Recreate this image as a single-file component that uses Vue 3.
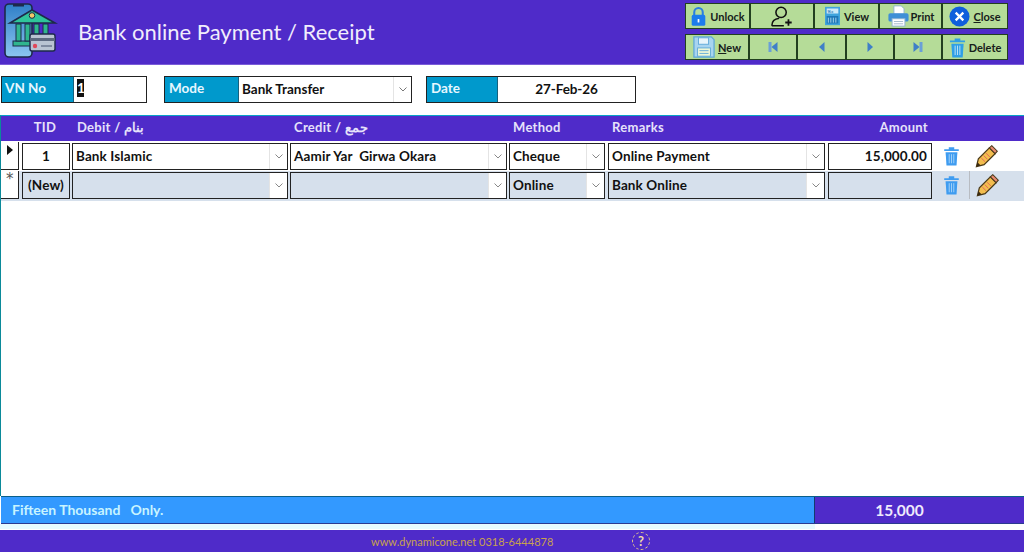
<script setup>
const rows = [
  { tid: '1', debit: 'Bank Islamic', credit: 'Aamir Yar  Girwa Okara', method: 'Cheque', remarks: 'Online Payment', amount: '15,000.00', isNew: false },
  { tid: '(New)', debit: '', credit: '', method: 'Online', remarks: 'Bank Online', amount: '', isNew: true }
]
const words = 'Fifteen Thousand   Only.'
</script>

<template>
  <div class="app">
    <header class="top">
      <svg class="logo" viewBox="0 0 60 60" width="60" height="60">
        <defs>
          <linearGradient id="ph" x1="0" y1="0" x2="0" y2="1">
            <stop offset="0" stop-color="#2f7fc8" />
            <stop offset="1" stop-color="#8cc6f0" />
          </linearGradient>
        </defs>
        <rect x="5" y="4" width="27" height="53" rx="4" fill="url(#ph)" stroke="#1d2a4a" stroke-width="1.6" />
        <rect x="13" y="4" width="11" height="2.5" fill="#1d2a4a" />
        <rect x="13" y="41" width="34" height="5" fill="#2fb58e" stroke="#1d2a4a" />
        <rect x="16" y="24" width="5" height="17" fill="#2fb58e" stroke="#1d2a4a" />
        <rect x="25" y="24" width="5" height="17" fill="#2fb58e" stroke="#1d2a4a" />
        <rect x="34" y="24" width="5" height="17" fill="#2fb58e" stroke="#1d2a4a" />
        <rect x="43" y="24" width="5" height="12" fill="#2fb58e" stroke="#1d2a4a" />
        <path d="M10 23 L32 10 L55 23 Z" fill="#2fc59a" stroke="#1d2a4a" stroke-width="1.6" />
        <circle cx="32" cy="15.5" r="2.8" fill="#f1c96a" stroke="#1d2a4a" />
        <rect x="30" y="34" width="25" height="17" rx="2" fill="#b9c4d2" stroke="#1d2a4a" stroke-width="1.4" />
        <rect x="30" y="38" width="25" height="3" fill="#5d6a80" />
        <circle cx="35" cy="46" r="2.2" fill="#e0485a" />
        <rect x="41" y="45" width="11" height="2" fill="#7f8ba0" />
      </svg>
      <h1 class="title">Bank online Payment / Receipt</h1>
      <div class="toolbar">
        <div class="tb-row tb-first">
          <button class="tb">
            <svg viewBox="0 0 20 24" width="17" height="21"><path d="M5 11V7a5 5 0 0 1 10 0v4" fill="none" stroke="#2a7fe0" stroke-width="2.4" /><rect x="2" y="10" width="16" height="13" rx="2" fill="#1c7cec" /><rect x="9" y="15" width="2" height="4" fill="#fff" /></svg>
            <span>Unlock</span>
          </button>
          <button class="tb">
            <svg viewBox="0 0 26 24" width="24" height="23"><circle cx="12" cy="7.5" r="5.6" fill="none" stroke="#111" stroke-width="1.7" /><path d="M2 22c0-5 4-7.5 8-8M2 22h13" fill="none" stroke="#111" stroke-width="1.7" /><path d="M20 15v7M16.500 18.500h7" stroke="#111" stroke-width="1.9" /></svg>
          </button>
          <button class="tb">
            <svg viewBox="0 0 20 24" width="17" height="20"><rect x="1" y="1" width="18" height="22" fill="#3fa3dc" /><rect x="3" y="3" width="14" height="6" fill="#cfeaf7" /><text x="4" y="8.300" class="mini">%=</text><rect x="3" y="12" width="14" height="9" fill="#1d78b8" /><path d="M5 14v6M8 14v6M11 14v6M14 14v6" stroke="#bfe3f5" stroke-width="1" /></svg>
            <span>View</span>
          </button>
          <button class="tb">
            <svg viewBox="0 0 24 24" width="23" height="22"><path d="M7 1h8l3 3v6H7z" fill="#fff" stroke="#8fb4d4" /><rect x="1" y="9" width="22" height="9" rx="2" fill="#3f8fd6" /><rect x="5" y="15" width="14" height="8" fill="#fff" stroke="#8fb4d4" /><path d="M7 18h10M7 20.500h10" stroke="#9fb8cc" /></svg>
            <span class="tight">Print</span>
          </button>
          <button class="tb">
            <svg viewBox="0 0 22 22" width="21" height="21"><circle cx="11" cy="11" r="10.500" fill="#0f5fdc" /><path d="M7 7l8 8M15 7l-8 8" stroke="#fff" stroke-width="2.400" /></svg>
            <span><u>C</u>lose</span>
          </button>
        </div>
        <div class="tb-row tb-second">
          <button class="tb">
            <svg viewBox="0 0 24 24" width="22" height="22"><path d="M1 1h19l3 3v19H1z" fill="#a8d4f0" stroke="#5fa8d8" stroke-width="1.400" /><rect x="6" y="2" width="11" height="7" fill="#e8f4fb" stroke="#5fa8d8" /><rect x="5" y="13" width="14" height="9" fill="#eef7d8" stroke="#5fa8d8" /><path d="M7 16h10M7 19h10" stroke="#5fa8d8" /></svg>
            <span><u>N</u>ew</span>
          </button>
          <button class="tb"><svg viewBox="0 0 12 12" width="12" height="12"><rect x="1.500" y="1" width="3" height="10" fill="#6a9fd8" /><path d="M10.500 1v10L4.500 6z" fill="#3f7fc8" /></svg></button>
          <button class="tb"><svg viewBox="0 0 12 12" width="12" height="12"><path d="M8.500 1v10L3 6z" fill="#3f7fc8" /></svg></button>
          <button class="tb"><svg viewBox="0 0 12 12" width="12" height="12"><path d="M3.500 1v10L9 6z" fill="#3f7fc8" /></svg></button>
          <button class="tb"><svg viewBox="0 0 12 12" width="12" height="12"><path d="M1.500 1v10l6-5z" fill="#3f7fc8" /><rect x="7.500" y="1" width="3" height="10" fill="#6a9fd8" /></svg></button>
          <button class="tb">
            <svg class="bin" viewBox="0 0 18 22" width="17" height="21"><path d="M6 2.500h6M1 4.500h16" stroke="#2f9fe6" stroke-width="2" /><path d="M2.500 7h13l-1 14.500h-11z" fill="#2f9fe6" /><path d="M6.500 9v10M9 9v10M11.500 9v10" stroke="#bfe3f8" /></svg>
            <span>Delete</span>
          </button>
        </div>
      </div>
    </header>

    <section class="form">
      <div class="field f-vn">
        <label>VN No</label>
        <div class="val"><mark>1</mark></div>
      </div>
      <div class="field f-mode">
        <label>Mode</label>
        <div class="val combo"><span class="txt">Bank Transfer</span><span class="arrow"><svg viewBox="0 0 8 5" width="8" height="5"><path d="M.5.5 4 4 7.500.5" fill="none" stroke="#777" /></svg></span></div>
      </div>
      <div class="field f-date">
        <label>Date</label>
        <div class="val center">27-Feb-26</div>
      </div>
    </section>

    <section class="sheet">
      <div class="grid-head">
        <span class="c-tid">TID</span>
        <span>Debit / بنام</span>
        <span>Credit / جمع</span>
        <span>Method</span>
        <span>Remarks</span>
        <span class="c-amt">Amount</span>
      </div>
      <div v-for="r in rows" :key="r.tid" class="grid-row" :class="{ fresh: r.isNew }">
        <div class="sel">
          <svg v-if="!r.isNew" viewBox="0 0 6 10" width="6" height="10"><path d="M0 0l6 5-6 5z" fill="#111" /></svg>
          <span v-else class="star">*</span>
        </div>
        <div class="cell tid">{{ r.tid }}</div>
        <div class="cell drop" v-for="k in ['debit', 'credit', 'method', 'remarks']" :key="k">
          <span class="txt">{{ r[k] }}</span>
          <span class="arrow"><svg viewBox="0 0 8 5" width="8" height="5"><path d="M.5.5 4 4 7.500.5" fill="none" stroke="#888" /></svg></span>
        </div>
        <div class="cell amt">{{ r.amount }}</div>
        <div class="act act-bin">
          <svg viewBox="0 0 18 22" width="17" height="20"><path d="M6 2.500h6M1 4.500h16" stroke="#3f9cf0" stroke-width="2" /><path d="M2.500 7h13l-1 14.500h-11z" fill="#3f9cf0" /><path d="M6.500 9v10M9 9v10M11.500 9v10" stroke="#a8d4f8" /></svg>
        </div>
        <div class="act act-pen">
          <svg viewBox="0 0 24 24" width="23" height="23"><path d="M1.500 22.500l2-8L15 3l6 6L9.500 20.500z" fill="#f2bd4e" stroke="#4a3a1a" stroke-width="1.300" /><path d="M15 3l2.500-2.300 5.800 5.800L21 9z" fill="#e88a70" stroke="#4a3a1a" stroke-width="1.100" /><path d="M6.500 13.500l4 4M9 11l4 4M11.500 8.500l4 4" stroke="#e2675a" stroke-width="1" /><path d="M1.500 22.500l1-4.500 3.500 3.500z" fill="#3a2a10" /></svg>
        </div>
      </div>
    </section>

    <section class="total">
      <div class="words">{{ words }}</div>
      <div class="sum">15,000</div>
    </section>
    <div class="strip"></div>

    <footer class="foot">
      <span class="web">www.dynamicone.net 0318-6444878</span>
      <span class="help">?</span>
    </footer>
  </div>
</template>

<style>
html, body { margin: 0; background: #fff; }
</style>

<style scoped>
.app {
  width: 1024px;
  height: 552px;
  display: flex;
  flex-direction: column;
  overflow: hidden;
  font-family: Lato, "Noto Sans", sans-serif;
  font-weight: 700;
  font-size: 13.500px;
  color: #111;
  background: #fff;
}
.top {
  height: 64px;
  flex: none;
  background: #4f2bc9;
  display: flex;
  align-items: flex-start;
  border-bottom: 1px solid #7a5cd8;
  box-sizing: content-box;
}
.logo { flex: none; }
.title {
  margin: 17px 0 0 18px;
  font-size: 22px;
  line-height: 30px;
  font-weight: 400;
  color: #f1edfc;
}
.toolbar {
  margin: 3px 16px 0 auto;
  width: 323px;
  display: flex;
  flex-direction: column;
  gap: 5px;
}
.tb-row { display: grid; height: 26px; }
.tb-first { grid-template-columns: 65px 64px 65px 63px 66px; }
.tb-second { grid-template-columns: 64px 48px 49px 48px 48px 66px; }
.tb {
  margin: 0;
  padding: 0;
  background: #b5dc98;
  border: 1px solid #22401f;
  display: flex;
  align-items: center;
  justify-content: center;
  gap: 3px;
  font: inherit;
  font-size: 11px;
  color: #16201a;
  min-width: 0;
}
.mini { font-size: 5px; fill: #1d78b8; font-family: Lato, sans-serif; }
.tight { margin-left: -2px; }
.form {
  height: 27px;
  flex: none;
  margin: 11px 0 12px;
  padding-left: 1px;
  display: flex;
}
.field { display: flex; height: 27px; box-sizing: border-box; border: 1px solid #222; }
.f-vn { width: 146px; }
.f-mode { width: 248px; margin-left: 17px; }
.f-date { width: 210px; margin-left: 14px; }
.field label {
  flex: none;
  background: #0099cc;
  color: #e6f7ff;
  padding-left: 4px;
  line-height: 23px;
  font-size: 13.500px;
  border-right: 1px solid #17607c;
  box-sizing: border-box;
}
.f-vn label { width: 72px; padding-left: 3px; }
.f-mode label { width: 74px; }
.f-date label { width: 71px; }
.val { flex: 1; line-height: 24px; min-width: 0; display: flex; }
.val mark { background: #111; color: #fff; width: 7px; text-align: center; height: 18px; line-height: 18px; margin: 2px 0 0 3px; }
.combo .txt { flex: 1; padding-left: 3px; }
.center { justify-content: center; letter-spacing: -.1px; }
.arrow {
  width: 17px;
  flex: none;
  background: #fff;
  border-left: 1px solid #e4e4e4;
  display: flex;
  align-items: center;
  justify-content: center;
}
.sheet {
  flex: 1;
  min-height: 0;
  border-top: 1px solid #0aa0c8;
  border-left: 1px solid #0b8a9a;
}
.grid-head {
  height: 25px;
  box-sizing: border-box;
  padding-bottom: 2px;
  background: #4f2bc9;
  color: #e6e2fa;
  display: grid;
  grid-template-columns: 76px 217px 219px 99px 216px 111px;
  align-items: center;
  font-size: 13px;
  line-height: 23px;
  letter-spacing: .3px;
  white-space: nowrap;
}
.c-tid { text-align: center; padding-left: 12px; }
.c-amt { text-align: right; margin-left: -20px; margin-right: 11px; }
.grid-row {
  height: 29px;
  display: flex;
  align-items: flex-start;
  margin-top: 1px;
}
.grid-row.fresh { background: #d6e0ec; margin-top: 0; height: 30px; }
.sel {
  width: 18px;
  height: 28px;
  flex: none;
  box-sizing: border-box;
  background: #fff;
  border-right: 1px solid #222;
  border-bottom: 1px solid #222;
  padding: 3px 0 0 6px;
  line-height: 10px;
  font-weight: 400;
}
.star { font-size: 15px; color: #555; font-family: "DejaVu Sans", sans-serif; margin-left: -1px; }
.cell {
  height: 27px;
  box-sizing: border-box;
  border: 1px solid #222;
  flex: none;
  line-height: 25px;
  background: #fff;
  margin-left: 2px;
  margin-top: 1px;
  white-space: pre;
  letter-spacing: .12px;
}
.fresh .cell { background: #d6e0ec; }
.tid { width: 48px; text-align: center; margin-left: 3px; }
.drop { display: flex; }
.drop .txt { flex: 1; padding-left: 3px; min-width: 0; overflow: hidden; }
.drop:nth-of-type(3) { width: 216px; }
.drop:nth-of-type(4) { width: 217px; }
.drop:nth-of-type(5) { width: 96px; }
.drop:nth-of-type(6) { width: 217px; margin-left: 3px; }
.amt { width: 104px; text-align: right; padding-right: 4px; margin-left: 3px; }
.act { height: 28px; display: flex; align-items: center; flex: none; }
.act-bin { width: 37px; box-sizing: border-box; padding-left: 11px; }
.act-pen { width: 54px; box-sizing: border-box; padding-left: 6px; }
.fresh .act-pen { border-left: 1px solid #b8bcc2; }
.total {
  height: 28px;
  flex: none;
  margin-left: 1px;
  display: flex;
  border-top: 1px solid #0a5f8a;
  border-bottom: 1px solid #2b3a90;
  box-sizing: border-box;
}
.words {
  width: 814px;
  background: #3399ff;
  color: #c8f4ff;
  padding-left: 11px;
  font-size: 14px;
  line-height: 25px;
  box-sizing: border-box;
  white-space: pre;
  border-right: 1px solid #123a70;
}
.sum {
  flex: 1;
  background: #4f2bc9;
  color: #efeafc;
  font-size: 15.500px;
  line-height: 27px;
  text-align: center;
  padding-right: 40px;
}
.strip {
  height: 5px;
  width: 815px;
  flex: none;
  background: #e6fbff;
}
.foot {
  height: 22px;
  flex: none;
  margin-top: 1px;
  background: #4f2bc9;
  display: flex;
  align-items: center;
  font-size: 11px;
  font-weight: 400;
  color: #c9a24e;
}
.web { margin-left: 371px; width: 260px; }
.help {
  width: 18px;
  height: 18px;
  border: 1px dashed #e5c98a;
  border-radius: 50%;
  box-sizing: border-box;
  text-align: center;
  line-height: 16px;
  font-size: 13px;
  font-weight: 700;
  color: #f1dca8;
  margin-left: 1px;
}
</style>
